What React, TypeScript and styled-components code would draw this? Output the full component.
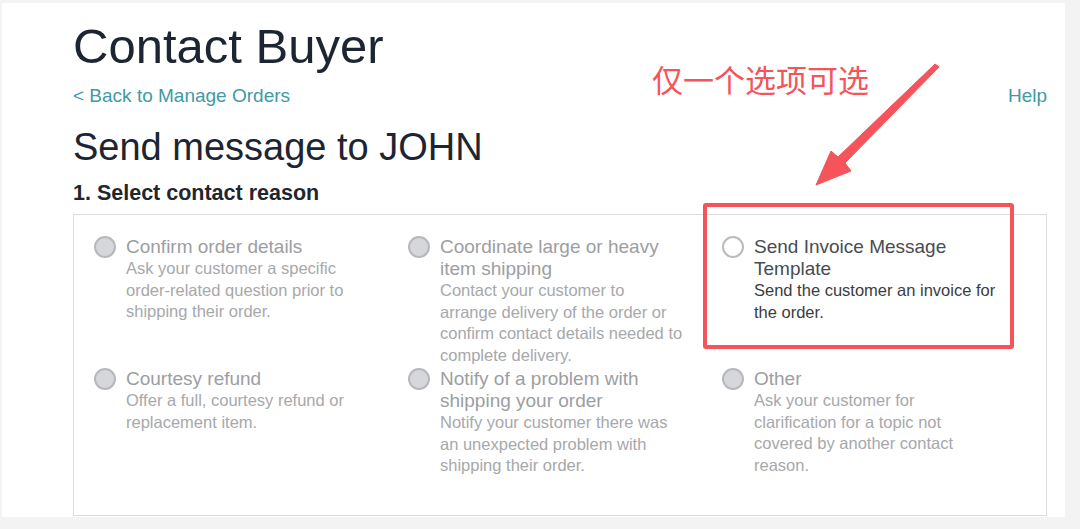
import styled, { createGlobalStyle } from 'styled-components'

const GlobalStyle = createGlobalStyle`
  html, body {
    margin: 0;
    padding: 0;
    background: #f3f3f3;
    font-family: "Liberation Sans", Arial, sans-serif;
  }
`

const Page = styled.div`
  padding: 3px 15px 0 2px;
  height: 529px;
  box-sizing: border-box;
  overflow: hidden;
`

const Panel = styled.div`
  position: relative;
  background: #fff;
  height: 514px;
  padding: 17px 18px 0 71px;
  box-sizing: border-box;
  overflow: hidden;
`

const Title = styled.h1`
  margin: 0;
  font-size: 49px;
  font-weight: 400;
  line-height: 52px;
  color: #1c2531;
`

const LinkRow = styled.div`
  display: flex;
  justify-content: space-between;
  align-items: baseline;
  margin-top: 12px;
`

const TextLink = styled.a`
  font-size: 19px;
  line-height: 24px;
  color: #3f9aa4;
  text-decoration: none;
  cursor: pointer;
`

const Heading = styled.h2`
  margin: 17px 0 0;
  font-size: 38px;
  font-weight: 400;
  line-height: 44px;
  color: #1c2531;
`

const SectionTitle = styled.h3`
  margin: 10px 0 0;
  font-size: 21.5px;
  font-weight: 700;
  line-height: 28px;
  color: #1f2630;
`

const ReasonBox = styled.div`
  margin-top: 7px;
  height: 302px;
  box-sizing: border-box;
  border: 1px solid #dcdcdc;
  padding: 21px 20px 0;
  display: grid;
  grid-template-columns: repeat(3, 314px);
  align-content: start;
  row-gap: 1px;
`

const Option = styled.label<{ $disabled?: boolean }>`
  display: flex;
  align-items: flex-start;
  gap: 10px;
  cursor: ${p => (p.$disabled ? 'default' : 'pointer')};
`

const Radio = styled.span<{ $disabled?: boolean }>`
  flex: none;
  width: 22px;
  height: 22px;
  border-radius: 50%;
  box-sizing: border-box;
  border: 2px solid ${p => (p.$disabled ? '#b6b8bc' : '#b9bbbf')};
  background: ${p => (p.$disabled ? '#d6d7da' : '#fff')};
`

const OptionText = styled.div`
  width: 244px;
`

const OptionTitle = styled.div<{ $disabled?: boolean }>`
  font-size: 19px;
  line-height: 22px;
  color: ${p => (p.$disabled ? '#9c9ea2' : '#474c55')};
`

const OptionDesc = styled.div<{ $disabled?: boolean }>`
  font-size: 16.5px;
  line-height: 21.7px;
  color: ${p => (p.$disabled ? '#a7a8ab' : '#3a3d42')};
`

const Note = styled.div`
  position: absolute;
  left: 650px;
  top: 58px;
  font-family: "Noto Sans CJK SC", "Noto Sans", sans-serif;
  font-size: 31px;
  line-height: 36px;
  color: #f4545a;
`

const ArrowSvg = styled.svg`
  position: absolute;
  left: 0;
  top: 0;
  pointer-events: none;
`

const Highlight = styled.div`
  position: absolute;
  left: 701px;
  top: 200px;
  width: 311px;
  height: 146px;
  border: 4px solid #f4545a;
  border-radius: 3px;
  box-sizing: border-box;
  pointer-events: none;
`

type Reason = {
  title: string
  desc: string
  disabled: boolean
}

const reasons: Reason[] = [
  {
    title: 'Confirm order details',
    desc: 'Ask your customer a specific order-related question prior to shipping their order.',
    disabled: true,
  },
  {
    title: 'Coordinate large or heavy item shipping',
    desc: 'Contact your customer to arrange delivery of the order or confirm contact details needed to complete delivery.',
    disabled: true,
  },
  {
    title: 'Send Invoice Message Template',
    desc: 'Send the customer an invoice for the order.',
    disabled: false,
  },
  {
    title: 'Courtesy refund',
    desc: 'Offer a full, courtesy refund or replacement item.',
    disabled: true,
  },
  {
    title: 'Notify of a problem with shipping your order',
    desc: 'Notify your customer there was an unexpected problem with shipping their order.',
    disabled: true,
  },
  {
    title: 'Other',
    desc: 'Ask your customer for clarification for a topic not covered by another contact reason.',
    disabled: true,
  },
]

export default function App() {
  return (
    <>
      <GlobalStyle />
      <Page>
        <Panel>
          <Title>Contact Buyer</Title>
          <LinkRow>
            <TextLink>&lt; Back to Manage Orders</TextLink>
            <TextLink>Help</TextLink>
          </LinkRow>
          <Heading>Send message to JOHN</Heading>
          <SectionTitle>1. Select contact reason</SectionTitle>
          <ReasonBox>
            {reasons.map(r => (
              <Option key={r.title} $disabled={r.disabled}>
                <Radio $disabled={r.disabled} />
                <OptionText>
                  <OptionTitle $disabled={r.disabled}>{r.title}</OptionTitle>
                  <OptionDesc $disabled={r.disabled}>{r.desc}</OptionDesc>
                </OptionText>
              </Option>
            ))}
          </ReasonBox>

          {/* annotation */}
          <Note>仅一个选项可选</Note>
          <ArrowSvg width="1063" height="514" viewBox="0 0 1063 514">
            <polygon
              points="933,61 937,64 843,160 849,168 814,182 829,148 836,154"
              fill="#f4545a"
              stroke="#f4545a"
              strokeWidth="1"
              strokeLinejoin="round"
            />
          </ArrowSvg>
          <Highlight />
        </Panel>
      </Page>
    </>
  )
}
